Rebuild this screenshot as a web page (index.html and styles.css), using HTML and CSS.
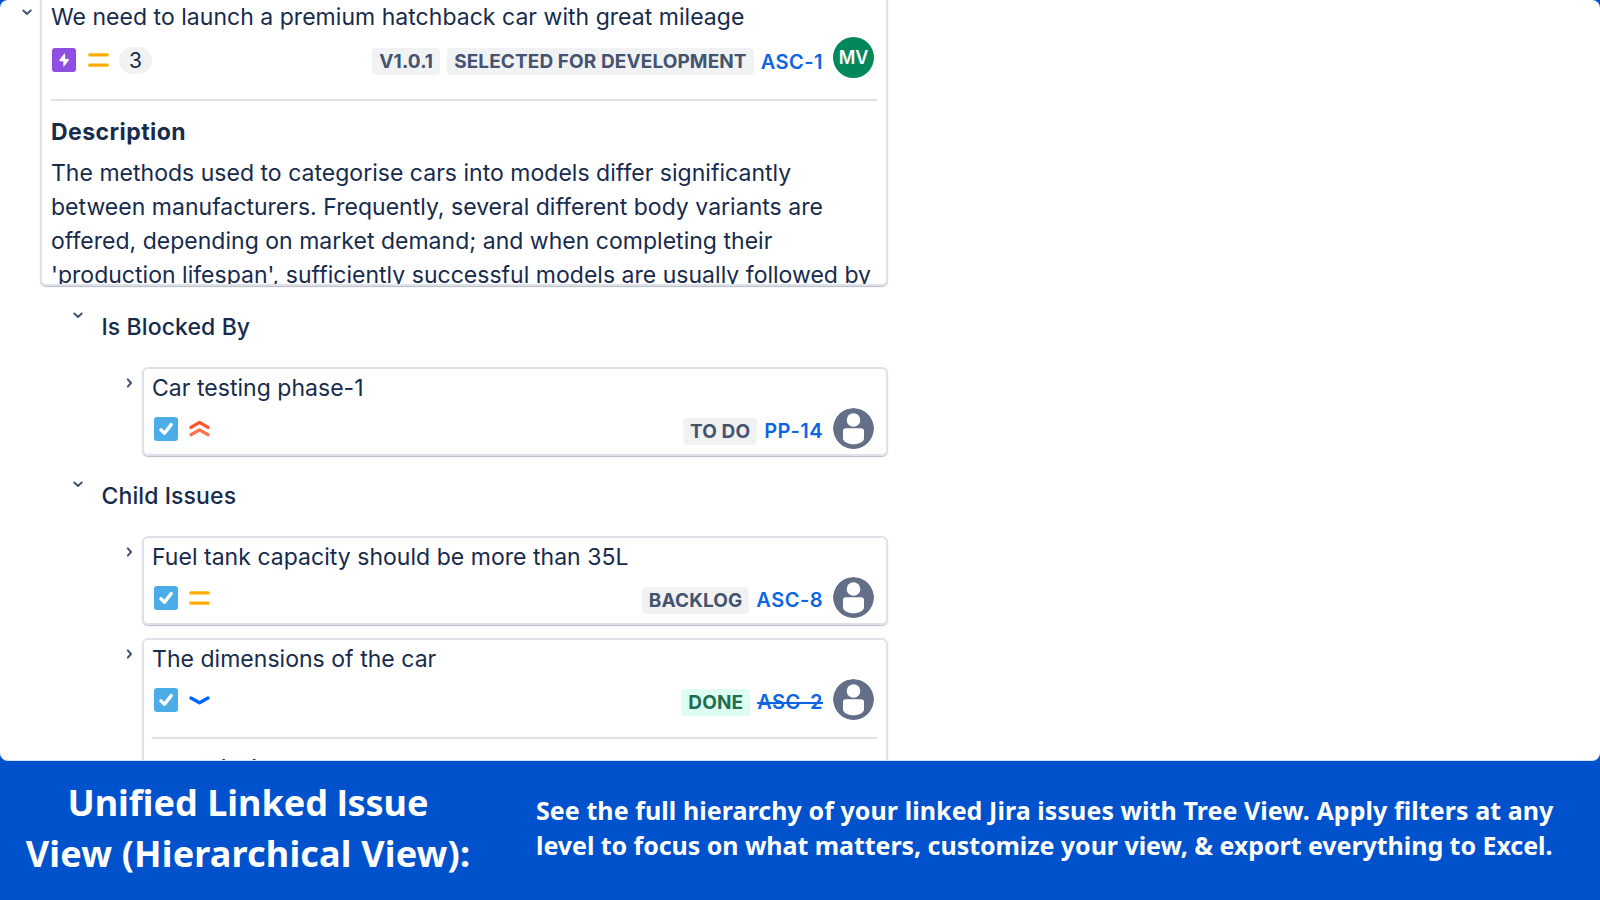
FILE: index.html
```html
<!DOCTYPE html>
<html lang="en">
<head>
    <meta charset="UTF-8">
    <meta name="viewport" content="width=device-width, initial-scale=1.0">
    <title>Unified Linked Issue View</title>
    <link rel="stylesheet" href="styles.css">
</head>
<body>
    <!-- Shared icons -->
    <svg class="sprite" aria-hidden="true">
        <symbol id="chevron-down" viewBox="0 0 10 7">
            <path d="M1.3 1.5 L5 4.9 L8.7 1.5" fill="none" stroke="#44546f" stroke-width="2" stroke-linecap="round" stroke-linejoin="round"/>
        </symbol>
        <symbol id="chevron-right" viewBox="0 0 7 10">
            <path d="M1.8 1.4 L5 5 L1.8 8.6" fill="none" stroke="#44546f" stroke-width="2" stroke-linecap="round" stroke-linejoin="round"/>
        </symbol>
        <symbol id="epic" viewBox="0 0 24 24">
            <rect width="24" height="24" rx="3" fill="#904ee2"/>
            <path d="M12.4 5.6 L7.2 12.2 Q6.8 13 7.6 13 L11.4 13.4 L11.3 18.2 Q11.6 18.8 12.2 18.3 L17 12 Q17.2 11.1 16.5 11 L13.2 10.8 L13.2 5.9 Q12.9 5.1 12.4 5.6 Z" fill="#fff"/>
        </symbol>
        <symbol id="task" viewBox="0 0 24 24">
            <rect width="24" height="24" rx="3" fill="#4bade8"/>
            <path d="M6.9 12.8 L10.5 16.2 L17.2 7.6" fill="none" stroke="#fff" stroke-width="3.4" stroke-linecap="round" stroke-linejoin="round"/>
        </symbol>
        <symbol id="medium" viewBox="0 0 21 24">
            <path d="M1.8 6.9 H19.2 M1.8 17.2 H19.2" fill="none" stroke="#ffab00" stroke-width="3.3" stroke-linecap="round"/>
        </symbol>
        <symbol id="highest" viewBox="0 0 21 24">
            <path d="M2 17.8 L10.5 12.9 L19 17.8" fill="none" stroke="#ff7452" stroke-width="3.3" stroke-linecap="round" stroke-linejoin="round"/>
            <path d="M2 10.4 L10.5 5.3 L19 10.4" fill="none" stroke="#ff5630" stroke-width="3.3" stroke-linecap="round" stroke-linejoin="round"/>
        </symbol>
        <symbol id="low" viewBox="0 0 21 24">
            <path d="M2 10 L10.5 14.8 L19 10" fill="none" stroke="#0065ff" stroke-width="3.3" stroke-linecap="round" stroke-linejoin="round"/>
        </symbol>
        <symbol id="user" viewBox="0 0 41 41">
            <circle cx="20.5" cy="20.5" r="20.5" fill="#626f86"/>
            <circle cx="20.5" cy="12" r="6.8" fill="#fff"/>
            <path d="M12.8 20.3 H28.2 Q31 20.3 31 23.1 V30.2 C31 33.6 26.2 36.2 20.5 36.2 C14.8 36.2 10 33.6 10 30.2 V23.1 Q10 20.3 12.8 20.3 Z" fill="#fff"/>
        </symbol>
    </svg>

    <main class="panel">
        <div class="node">
            <svg class="toggle toggle-down"><use href="#chevron-down"/></svg>
            <article class="card card-root">
                <h3 class="card-title">We need to launch a premium hatchback car with great mileage</h3>
                <div class="meta">
                    <svg class="type-icon"><use href="#epic"/></svg>
                    <svg class="priority"><use href="#medium"/></svg>
                    <span class="badge">3</span>
                    <span class="spacer"></span>
                    <span class="tag">V1.0.1</span>
                    <span class="tag">SELECTED FOR DEVELOPMENT</span>
                    <a class="key">ASC-1</a>
                    <span class="avatar avatar-initials">MV</span>
                </div>
                <div class="details">
                    <h4>Description</h4>
                    <p>The methods used to categorise cars into models differ significantly<br>
                    between manufacturers. Frequently, several different body variants are<br>
                    offered, depending on market demand; and when completing their<br>
                    'production lifespan', sufficiently successful models are usually followed by</p>
                </div>
            </article>
        </div>

        <section class="group">
            <div class="group-head">
                <svg class="toggle toggle-down"><use href="#chevron-down"/></svg>
                <h3>Is Blocked By</h3>
            </div>
            <div class="node">
                <svg class="toggle toggle-right"><use href="#chevron-right"/></svg>
                <article class="card">
                    <h3 class="card-title">Car testing phase-1</h3>
                    <div class="meta">
                        <svg class="type-icon"><use href="#task"/></svg>
                        <svg class="priority"><use href="#highest"/></svg>
                        <span class="spacer"></span>
                        <span class="tag">TO DO</span>
                        <a class="key">PP-14</a>
                        <svg class="avatar"><use href="#user"/></svg>
                    </div>
                </article>
            </div>
        </section>

        <section class="group">
            <div class="group-head">
                <svg class="toggle toggle-down"><use href="#chevron-down"/></svg>
                <h3>Child Issues</h3>
            </div>
            <div class="node">
                <svg class="toggle toggle-right"><use href="#chevron-right"/></svg>
                <article class="card">
                    <h3 class="card-title">Fuel tank capacity should be more than 35L</h3>
                    <div class="meta">
                        <svg class="type-icon"><use href="#task"/></svg>
                        <svg class="priority"><use href="#medium"/></svg>
                        <span class="spacer"></span>
                        <span class="tag">BACKLOG</span>
                        <a class="key">ASC-8</a>
                        <svg class="avatar"><use href="#user"/></svg>
                    </div>
                </article>
            </div>
            <div class="node">
                <svg class="toggle toggle-right"><use href="#chevron-right"/></svg>
                <article class="card">
                    <h3 class="card-title">The dimensions of the car</h3>
                    <div class="meta">
                        <svg class="type-icon"><use href="#task"/></svg>
                        <svg class="priority"><use href="#low"/></svg>
                        <span class="spacer"></span>
                        <span class="tag tag-done">DONE</span>
                        <a class="key key-done">ASC-2</a>
                        <svg class="avatar"><use href="#user"/></svg>
                    </div>
                    <div class="details">
                        <h4>Description</h4>
                    </div>
                </article>
            </div>
        </section>
    </main>

    <footer class="banner">
        <h1>Unified Linked <span class="plain-i">I</span>ssue<br><span class="wide">View (Hierarchical View):</span></h1>
        <p>See the full hierarchy of your linked Jira issues with Tree View. Apply filters at any<br><span class="tight">level to focus on what matters, customize your view, &amp; export everything to Excel.</span></p>
    </footer>
</body>
</html>
```

FILE: styles.css
```css
:root {
    --blue: #0052cc;
    --link: #0c66e4;
    --text: #172b4d;
    --text-subtle: #44546f;
    --border: #dfe1e8;
    --tag-bg: #f1f2f4;
}

* {
    box-sizing: border-box;
}

body {
    margin: 0;
    height: 900px;
    display: flex;
    flex-direction: column;
    overflow: hidden;
    background: var(--blue);
    color: var(--text);
    font-family: Inter, "Liberation Sans", sans-serif;
    font-size: 23px;
    line-height: 34px;
}

h1, h3, h4, p {
    margin: 0;
}

.sprite {
    display: none;
}

.panel {
    height: 761px;
    overflow: hidden;
    background: #fff;
    border-bottom: 1px solid #d5e1f5;
    border-radius: 8px;
}

/* Tree */
.node {
    display: flex;
    align-items: flex-start;
    width: 888px;
    padding-left: 22px;
}

.panel > .node {
    margin-top: -4px;
}

.toggle {
    flex: none;
}

.toggle-down {
    width: 10px;
    height: 7px;
    margin: 13px 8px 0 0;
}

.toggle-right {
    width: 7px;
    height: 10px;
    margin: 11px 9px 0 0;
}

.group {
    padding-top: 24px;
}

.group + .group {
    padding-top: 23px;
}

.group .node {
    padding-left: 126px;
}

.group .node + .node {
    margin-top: 13px;
}

.group-head {
    display: flex;
    align-items: flex-start;
    padding-left: 73px;
    margin-bottom: 23px;
}

.group-head .toggle {
    margin: 2px 18.5px 0 0;
}

.group-head h3 {
    font-size: 23px;
    font-weight: 500;
    letter-spacing: 0.1px;
}

/* Cards */
.card {
    flex: 1;
    padding: 2px 9px 5px 8px;
    border: 2px solid var(--border);
    border-radius: 6px;
    box-shadow: 0 1px 1px rgba(9, 30, 66, 0.3);
}

.card-root {
    height: 290px;
    padding-left: 9px;
    overflow: hidden;
}

.card-title {
    margin-bottom: 3px;
    font-size: 23px;
    font-weight: 400;
    letter-spacing: 0.03px;
}

.meta {
    display: flex;
    align-items: flex-start;
    height: 41px;
}

.type-icon {
    width: 24px;
    height: 24px;
    margin: 9px 11px 0 2px;
}

.priority {
    width: 21px;
    height: 24px;
    margin-top: 9px;
}

.badge {
    width: 33px;
    height: 27px;
    margin: 10px 0 0 10px;
    border-radius: 14px;
    background: var(--tag-bg);
    font-size: 21px;
    line-height: 28px;
    text-align: center;
}

.spacer {
    flex: 1;
}

.tag {
    height: 27px;
    margin: 10px 7px 0 0;
    padding: 0 7px;
    border-radius: 4px;
    background: var(--tag-bg);
    color: var(--text-subtle);
    font-size: 19px;
    font-weight: 700;
    line-height: 27px;
    letter-spacing: 0.1px;
}

.tag-done {
    background: #dcfff1;
    color: #216e4e;
}

.key {
    margin: 10px 10px 0 0;
    color: var(--link);
    font-size: 20px;
    font-weight: 600;
    line-height: 27px;
    letter-spacing: 0.5px;
}

.key-done {
    text-decoration: line-through;
}

.avatar {
    width: 41px;
    height: 41px;
    margin-right: 3px;
    border-radius: 50%;
}

.avatar-initials {
    background: #04875a;
    color: #fff;
    font-size: 18px;
    font-weight: 600;
    line-height: 41px;
    text-align: center;
}

.details {
    margin-top: 17px;
    padding-top: 13px;
    border-top: 2px solid var(--border);
}

.details h4 {
    margin-bottom: 7px;
    font-size: 23px;
    font-weight: 700;
    letter-spacing: 0.45px;
}

.details p {
    letter-spacing: 0.02px;
    white-space: nowrap;
}

/* The root card sits slightly looser than the nested ones */
.card-root .type-icon {
    margin: 11px 12px 0 1px;
}

.card-root .priority {
    margin-top: 11px;
}

.card-root .tag,
.card-root .key {
    margin-top: 11px;
    line-height: 28px;
}

.card-root .details {
    margin-top: 21px;
    padding-top: 14px;
}

/* Banner */
.banner {
    flex: 1;
    display: flex;
    align-items: flex-start;
    padding: 17px 0 0 25px;
    color: #fff;
    font-family: "Noto Sans", "Open Sans", sans-serif;
}

.banner h1 {
    width: 446px;
    margin-right: 65px;
    font-size: 36px;
    font-weight: 700;
    line-height: 50.5px;
    text-align: center;
    white-space: nowrap;
}

.banner p {
    padding-top: 15px;
    font-size: 25px;
    font-weight: 700;
    line-height: 35px;
    letter-spacing: 0.07px;
    white-space: nowrap;
}

.wide {
    letter-spacing: 0.16px;
}

.tight {
    letter-spacing: -0.05px;
}

.plain-i {
    font-family: Inter, sans-serif;
}
```
